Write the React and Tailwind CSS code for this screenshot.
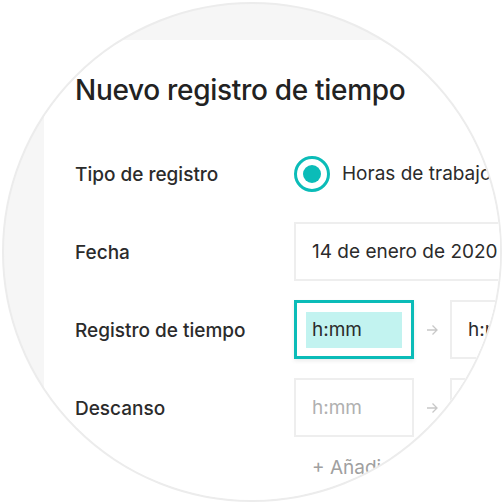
import React from 'react';

const Field = ({ children, className = '' }) => (
  <div className={`h-[59px] flex items-center border-2 border-[#eeeeee] bg-white ${className}`}>
    {children}
  </div>
);

const Arrow = () => (
  <svg width="12" height="12" viewBox="0 0 12 12" className="mx-[12px] shrink-0" fill="none" stroke="#c8c8c8" strokeWidth="1.3">
    <path d="M1 6h10M6.5 1.5 11 6l-4.5 4.5" />
  </svg>
);

const Row = ({ label, children }) => (
  <div className="flex items-center h-[59px]">
    <div className="w-[219px] shrink-0 pt-[3px] text-[19px] font-medium text-[#2b2b2b]">{label}</div>
    <div className="flex items-center">{children}</div>
  </div>
);

export default function App() {
  return (
    <div className="w-[504px] h-[504px] bg-white" style={{ fontFamily: 'Inter, "Noto Sans", sans-serif' }}>
      <div className="w-[500px] h-[500px] m-[2px] rounded-full overflow-hidden border-2 border-[#ececec] bg-[#f6f6f6] pt-[36px] pl-[40px]">
        <div className="w-[700px] h-[600px] bg-white pl-[31px] pt-[33px]">
          <h1 className="text-[28px] leading-[34px] font-medium text-[#222222] tracking-[-0.3px]">
            Nuevo registro de tiempo
          </h1>

          <div className="mt-[37px] flex flex-col gap-[19px]">
            <Row label="Tipo de registro">
              <div className="w-[36px] h-[36px] rounded-full border-[3px] border-[#0bbcb8] flex items-center justify-center">
                <div className="w-[18px] h-[18px] rounded-full bg-[#0bbcb8]" />
              </div>
              <span className="ml-[12px] pt-[2px] text-[19px] text-[#2b2b2b] whitespace-nowrap">Horas de trabajo</span>
            </Row>

            <Row label="Fecha">
              <Field className="w-[300px] px-[16px]">
                <span className="pt-[2px] text-[19px] text-[#2b2b2b] whitespace-nowrap">14 de enero de 2020</span>
              </Field>
            </Row>

            <Row label="Registro de tiempo">
              <div className="w-[120px] h-[59px] border-[3px] border-[#0bbcb8] bg-white flex items-center px-[9px] shadow-[0_2px_4px_rgba(0,0,0,0.08)]">
                <div className="w-full h-[36px] bg-[#c2f3f0] flex items-center px-[6px]">
                  <span className="pt-[2px] text-[19px] text-[#2b2b2b]">h:mm</span>
                </div>
              </div>
              <Arrow />
              <Field className="w-[120px] px-[16px]">
                <span className="pt-[2px] text-[19px] text-[#2b2b2b]">h:mm</span>
              </Field>
            </Row>

            <Row label="Descanso">
              <Field className="w-[120px] px-[16px]">
                <span className="pt-[2px] text-[19px] text-[#b0b0b0]">h:mm</span>
              </Field>
              <Arrow />
              <Field className="w-[120px] px-[16px]">
                <span className="pt-[2px] text-[19px] text-[#b0b0b0]">h:mm</span>
              </Field>
            </Row>
          </div>

          <div className="ml-[237px] mt-[17px] text-[19px] text-[#a0a0a0] whitespace-nowrap">+ Añadir descanso</div>
        </div>
      </div>
    </div>
  );
}
